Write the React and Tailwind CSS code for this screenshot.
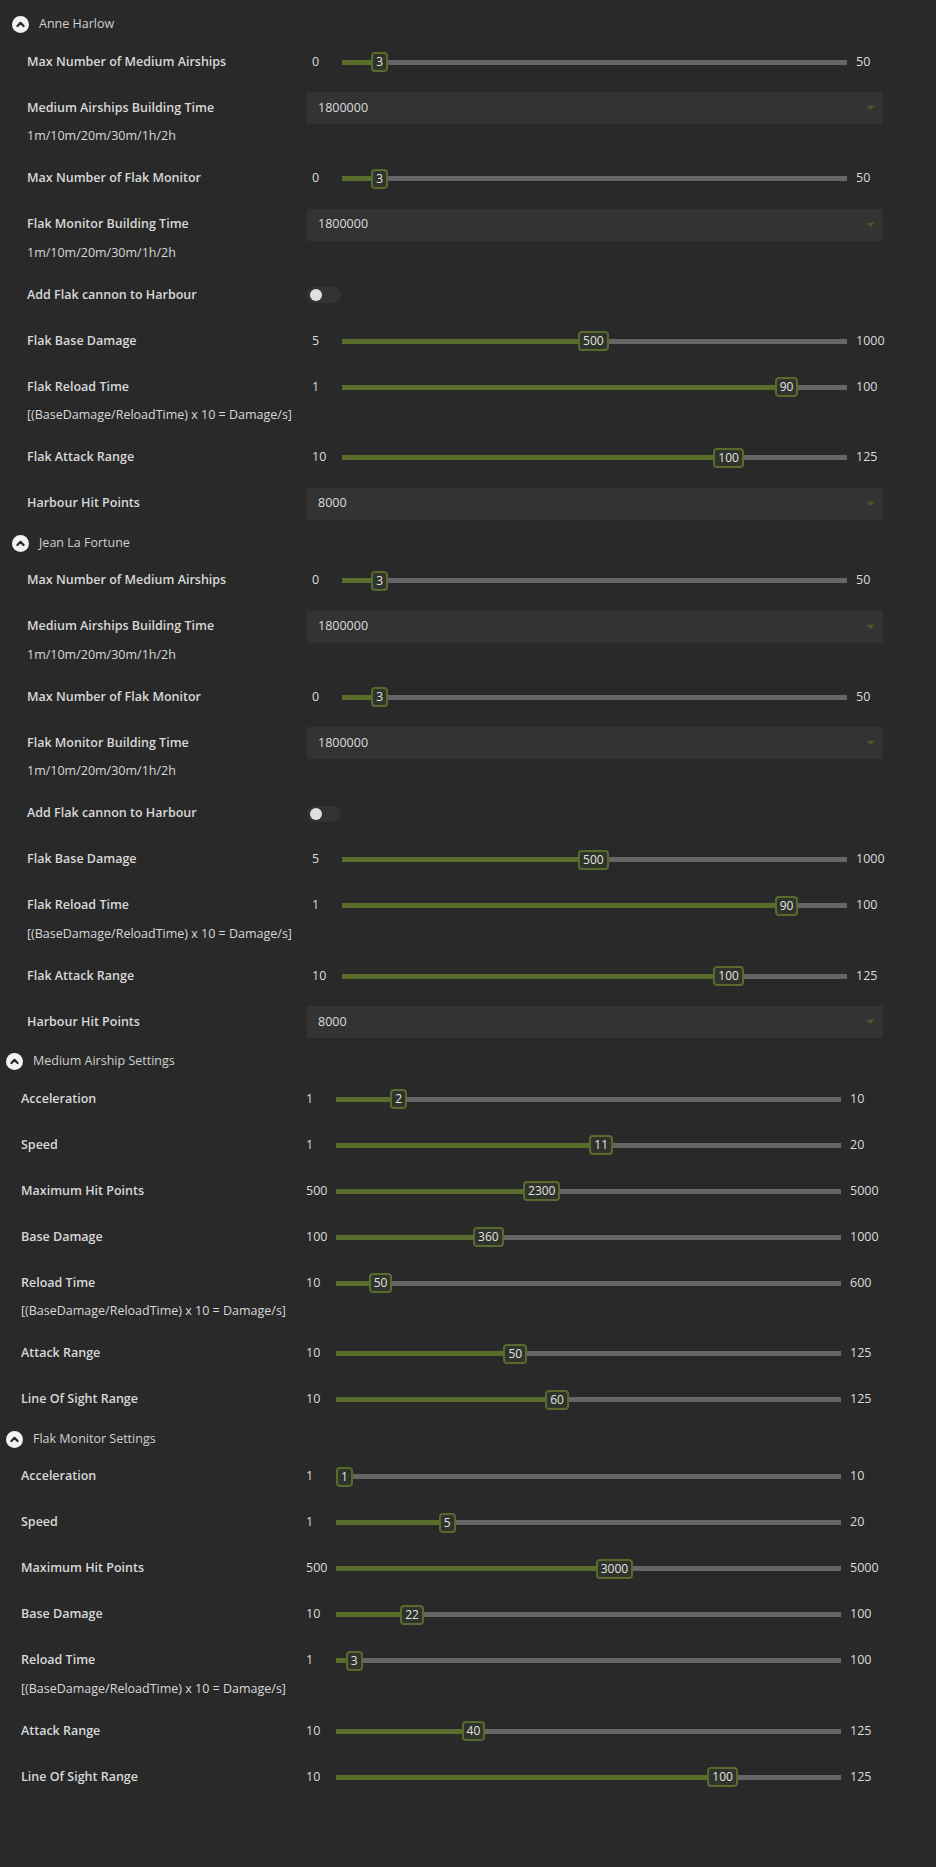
import React from 'react';

const SUB_TIME = '1m/10m/20m/30m/1h/2h';
const SUB_DPS = '[(BaseDamage/ReloadTime) x 10 = Damage/s]';

const commanderRows = [
  { type: 'slider', label: 'Max Number of Medium Airships', min: 0, max: 50, value: 3 },
  { type: 'select', label: 'Medium Airships Building Time', value: '1800000', sub: SUB_TIME },
  { type: 'slider', label: 'Max Number of Flak Monitor', min: 0, max: 50, value: 3 },
  { type: 'select', label: 'Flak Monitor Building Time', value: '1800000', sub: SUB_TIME },
  { type: 'toggle', label: 'Add Flak cannon to Harbour' },
  { type: 'slider', label: 'Flak Base Damage', min: 5, max: 1000, value: 500 },
  { type: 'slider', label: 'Flak Reload Time', min: 1, max: 100, value: 90, sub: SUB_DPS },
  { type: 'slider', label: 'Flak Attack Range', min: 10, max: 125, value: 100 },
  { type: 'select', label: 'Harbour Hit Points', value: '8000' },
];

const sections = [
  { title: 'Anne Harlow', nested: true, rows: commanderRows },
  { title: 'Jean La Fortune', nested: true, rows: commanderRows },
  {
    title: 'Medium Airship Settings',
    rows: [
      { type: 'slider', label: 'Acceleration', min: 1, max: 10, value: 2 },
      { type: 'slider', label: 'Speed', min: 1, max: 20, value: 11 },
      { type: 'slider', label: 'Maximum Hit Points', min: 500, max: 5000, value: 2300 },
      { type: 'slider', label: 'Base Damage', min: 100, max: 1000, value: 360 },
      { type: 'slider', label: 'Reload Time', min: 10, max: 600, value: 50, sub: SUB_DPS },
      { type: 'slider', label: 'Attack Range', min: 10, max: 125, value: 50 },
      { type: 'slider', label: 'Line Of Sight Range', min: 10, max: 125, value: 60 },
    ],
  },
  {
    title: 'Flak Monitor Settings',
    rows: [
      { type: 'slider', label: 'Acceleration', min: 1, max: 10, value: 1 },
      { type: 'slider', label: 'Speed', min: 1, max: 20, value: 5 },
      { type: 'slider', label: 'Maximum Hit Points', min: 500, max: 5000, value: 3000 },
      { type: 'slider', label: 'Base Damage', min: 10, max: 100, value: 22 },
      { type: 'slider', label: 'Reload Time', min: 1, max: 100, value: 3, sub: SUB_DPS },
      { type: 'slider', label: 'Attack Range', min: 10, max: 125, value: 40 },
      { type: 'slider', label: 'Line Of Sight Range', min: 10, max: 125, value: 100 },
    ],
  },
];

function CollapseIcon() {
  return (
    <svg width="17" height="17" viewBox="0 0 17 17">
      <circle cx="8.5" cy="8.5" r="8.5" fill="#f2f2f2" />
      <path d="M5.4 10 L8.5 6.9 L11.6 10" fill="none" stroke="#292929" strokeWidth="2.2" strokeLinecap="round" strokeLinejoin="round" />
    </svg>
  );
}

function Slider({ min, max, value }) {
  const frac = (value - min) / (max - min);
  return (
    <div className="flex items-center w-full">
      <div className="w-[35px] shrink-0 pl-[5px] text-[12.5px] text-[#dcdcdc]">{min}</div>
      <div className="flex-1 flex items-center h-[20px]">
        {/* filled part, thumb, rest: flex-grow keeps the thumb inside the track */}
        <div className="h-[5px] bg-[#5a6d2c] basis-0" style={{ flexGrow: frac }} />
        <div className="h-[20px] px-[3px] min-w-[15px] flex items-center justify-center rounded-[4px] border-2 border-[#596a2d] bg-[#30332b] text-[12px] leading-none text-[#e2e2e2]">
          {value}
        </div>
        <div className="h-[5px] bg-[#666666] basis-0" style={{ flexGrow: 1 - frac }} />
      </div>
      <div className="w-[36px] shrink-0 pl-[9px] whitespace-nowrap text-[12.5px] text-[#dcdcdc]">{max}</div>
    </div>
  );
}

function Select({ value }) {
  return (
    <div className="h-[32px] w-full bg-[#333333] flex items-center justify-between pl-[11px] pr-[8px]">
      <span className="text-[12.5px] text-[#dcdcdc]">{value}</span>
      <svg width="9" height="6" viewBox="0 0 9 6">
        <path d="M0.5 0.8 L8.5 0.8 L4.5 5 Z" fill="#4e5a2b" />
      </svg>
    </div>
  );
}

function Toggle() {
  return (
    <div className="w-[34px] h-[16px] rounded-full bg-[#333333] flex items-center px-[3px]">
      <div className="w-[12px] h-[12px] rounded-full bg-[#e0e0e0]" />
    </div>
  );
}

function Row({ row }) {
  return (
    <div>
      <div className="h-[46px] flex items-center">
        <div className="w-[295px] shrink-0 pl-[15px] text-[12.5px] font-semibold text-[#d8d8d8]">{row.label}</div>
        <div className="w-[576px] flex items-center">
          {row.type === 'slider' && <Slider min={row.min} max={row.max} value={row.value} />}
          {row.type === 'select' && <Select value={row.value} />}
          {row.type === 'toggle' && <Toggle />}
        </div>
      </div>
      {row.sub && (
        <div className="h-[24.5px] leading-[10px] pl-[15px] text-[12.5px] text-[#d8d8d8]">{row.sub}</div>
      )}
    </div>
  );
}

export default function App() {
  return (
    <div
      className="min-h-screen bg-[#292929] pt-[8px]"
      style={{ fontFamily: '"Open Sans", "Noto Sans", sans-serif' }}
    >
      {sections.map((s) => (
        <div key={s.title} className={s.nested ? 'pl-[12px]' : 'pl-[6px]'}>
          <div className="h-[31px] pt-[2px] flex items-center gap-[10px]">
            <CollapseIcon />
            <span className="text-[12.5px] text-[#d0d0d0]">{s.title}</span>
          </div>
          {s.rows.map((r, i) => (
            <Row key={i} row={r} />
          ))}
        </div>
      ))}
    </div>
  );
}
